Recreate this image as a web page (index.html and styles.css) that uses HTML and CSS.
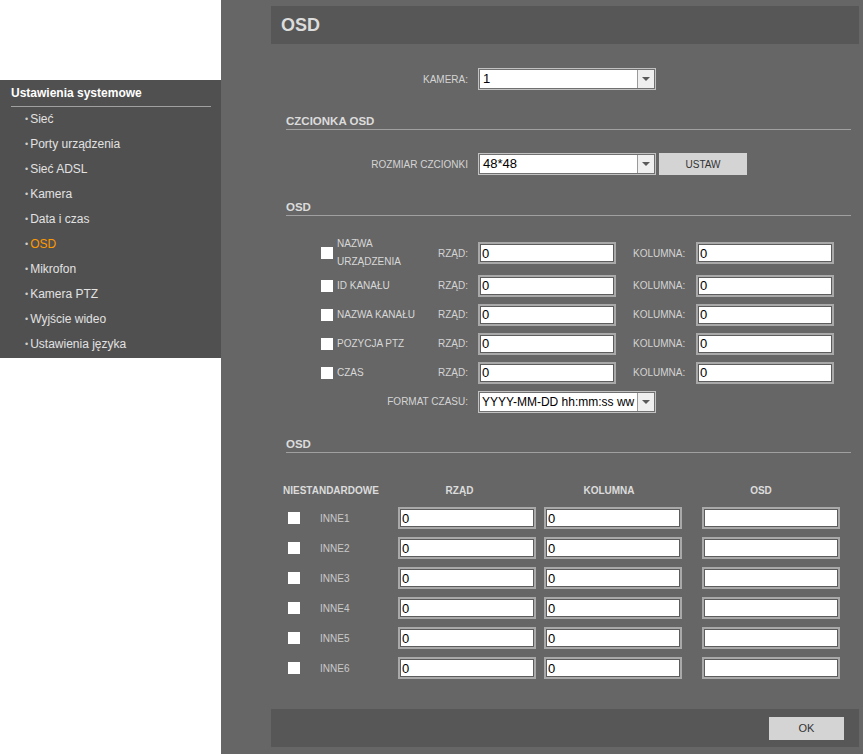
FILE: index.html
```html
<!DOCTYPE html>
<html lang="pl">
<head>
<meta charset="utf-8">
<title>OSD</title>
<link rel="stylesheet" href="styles.css">
</head>
<body>
<div class="page">
  <aside class="sidebar">
    <nav class="menu">
      <div class="menu-title">Ustawienia systemowe</div>
      <ul class="menu-list">
        <li class="menu-item">Sieć</li>
        <li class="menu-item">Porty urządzenia</li>
        <li class="menu-item">Sieć ADSL</li>
        <li class="menu-item">Kamera</li>
        <li class="menu-item">Data i czas</li>
        <li class="menu-item active">OSD</li>
        <li class="menu-item">Mikrofon</li>
        <li class="menu-item">Kamera PTZ</li>
        <li class="menu-item">Wyjście wideo</li>
        <li class="menu-item">Ustawienia języka</li>
      </ul>
    </nav>
  </aside>
  <main class="main">
    <div class="titlebar"><h1 class="title">OSD</h1></div>
    <div class="content">
      <div class="field-row row-camera">
        <span class="field-label">KAMERA:</span>
        <div class="select"><span class="select-value">1</span><span class="select-btn"></span></div>
      </div>

      <h2 class="section s-font">CZCIONKA OSD</h2>
      <div class="field-row row-size">
        <span class="field-label">ROZMIAR CZCIONKI</span>
        <div class="select"><span class="select-value">48*48</span><span class="select-btn"></span></div>
        <button class="btn-set">USTAW</button>
      </div>

      <h2 class="section s-osd">OSD</h2>
      <div class="osd-rows">
        <div class="osd-row tall">
          <div class="check-group"><input type="checkbox" class="cb"><span class="check-label">NAZWA<br>URZĄDZENIA</span></div>
          <span class="row-label">RZĄD:</span><input class="input" type="text" value="0">
          <span class="row-label col-label">KOLUMNA:</span><input class="input" type="text" value="0">
        </div>
        <div class="osd-row">
          <div class="check-group"><input type="checkbox" class="cb"><span class="check-label">ID KANAŁU</span></div>
          <span class="row-label">RZĄD:</span><input class="input" type="text" value="0">
          <span class="row-label col-label">KOLUMNA:</span><input class="input" type="text" value="0">
        </div>
        <div class="osd-row">
          <div class="check-group"><input type="checkbox" class="cb"><span class="check-label">NAZWA KANAŁU</span></div>
          <span class="row-label">RZĄD:</span><input class="input" type="text" value="0">
          <span class="row-label col-label">KOLUMNA:</span><input class="input" type="text" value="0">
        </div>
        <div class="osd-row">
          <div class="check-group"><input type="checkbox" class="cb"><span class="check-label">POZYCJA PTZ</span></div>
          <span class="row-label">RZĄD:</span><input class="input" type="text" value="0">
          <span class="row-label col-label">KOLUMNA:</span><input class="input" type="text" value="0">
        </div>
        <div class="osd-row">
          <div class="check-group"><input type="checkbox" class="cb"><span class="check-label">CZAS</span></div>
          <span class="row-label">RZĄD:</span><input class="input" type="text" value="0">
          <span class="row-label col-label">KOLUMNA:</span><input class="input" type="text" value="0">
        </div>
        <div class="field-row row-format">
          <span class="field-label">FORMAT CZASU:</span>
          <div class="select"><span class="select-value small">YYYY-MM-DD hh:mm:ss ww</span><span class="select-btn"></span></div>
        </div>
      </div>

      <h2 class="section s-osd2">OSD</h2>
      <div class="custom-grid">
        <div class="gh first">NIESTANDARDOWE</div>
        <div class="gh">RZĄD</div>
        <div class="gh">KOLUMNA</div>
        <div class="gh">OSD</div>

        <div class="g-check"><input type="checkbox" class="cb"><span class="g-label">INNE1</span></div>
        <input class="input g-input" type="text" value="0">
        <input class="input g-input" type="text" value="0">
        <input class="input g-input" type="text" value="">

        <div class="g-check"><input type="checkbox" class="cb"><span class="g-label">INNE2</span></div>
        <input class="input g-input" type="text" value="0">
        <input class="input g-input" type="text" value="0">
        <input class="input g-input" type="text" value="">

        <div class="g-check"><input type="checkbox" class="cb"><span class="g-label">INNE3</span></div>
        <input class="input g-input" type="text" value="0">
        <input class="input g-input" type="text" value="0">
        <input class="input g-input" type="text" value="">

        <div class="g-check"><input type="checkbox" class="cb"><span class="g-label">INNE4</span></div>
        <input class="input g-input" type="text" value="0">
        <input class="input g-input" type="text" value="0">
        <input class="input g-input" type="text" value="">

        <div class="g-check"><input type="checkbox" class="cb"><span class="g-label">INNE5</span></div>
        <input class="input g-input" type="text" value="0">
        <input class="input g-input" type="text" value="0">
        <input class="input g-input" type="text" value="">

        <div class="g-check"><input type="checkbox" class="cb"><span class="g-label">INNE6</span></div>
        <input class="input g-input" type="text" value="0">
        <input class="input g-input" type="text" value="0">
        <input class="input g-input" type="text" value="">
      </div>
    </div>
    <div class="footer"><button class="btn-ok">OK</button></div>
  </main>
</div>
</body>
</html>
```

FILE: styles.css
```css
* { box-sizing: border-box; }
html, body { margin: 0; height: 100%; }
body {
  font-family: "Liberation Sans", Arial, sans-serif;
  background: #666666;
  overflow: hidden;
}
.page { display: flex; height: 100vh; }

/* Sidebar */
.sidebar { width: 221px; flex: none; background: #ffffff; padding-top: 80px; }
.menu { background: #505050; padding-bottom: 1px; }
.menu-title {
  margin: 0 10px 0 11px;
  height: 27px;
  line-height: 26px;
  border-bottom: 1px solid #a0a0a0;
  color: #ffffff;
  font-weight: bold;
  font-size: 12px;
}
.menu-list { list-style: none; margin: 0; padding: 0; }
.menu-item {
  padding-left: 25px;
  height: 25px;
  line-height: 25px;
  font-size: 12px;
  color: #e2e2e2;
  white-space: nowrap;
}
.menu-item::before {
  content: "•";
  color: #cfcfcf;
  font-size: 9px;
  margin-right: 2px;
  vertical-align: 1px;
}
.menu-item.active { color: #ff9900; }

/* Main */
.main {
  flex: 1;
  display: flex;
  flex-direction: column;
  padding: 6px 4px 7px 50px;
}
.titlebar { height: 38px; flex: none; background: #575757; padding-left: 10px; }
.title { margin: 0; font-size: 18px; line-height: 38px; color: #dcdcdc; font-weight: bold; }
.content { flex: 1; padding: 0 8px 0 15px; }
.footer {
  height: 38px;
  flex: none;
  background: #575757;
  display: flex;
  justify-content: flex-end;
  align-items: center;
  padding-right: 15px;
}
.btn-ok {
  width: 75px;
  height: 23px;
  border: 0;
  background: #d4d4d4;
  color: #333;
  font: 11px "Liberation Sans", Arial, sans-serif;
  padding: 0;
}

/* Form rows */
.field-row { display: flex; align-items: center; height: 22px; }
.field-label {
  width: 192px;
  padding-right: 10px;
  flex: none;
  text-align: right;
  font-size: 10px;
  color: #d4d4d4;
  white-space: nowrap;
}
.row-camera { margin-top: 24px; }
.row-size { margin-top: 23px; }
.row-format { height: 29px; }

.section {
  margin: 0;
  font-size: 11.5px;
  line-height: 14px;
  padding-bottom: 1px;
  border-bottom: 1px solid #a0a0a0;
  color: #dcdcdc;
  font-weight: bold;
}
.s-font { margin-top: 24px; }
.s-osd { margin-top: 25px; }
.s-osd2 { margin-top: 21px; }

.select {
  width: 176px;
  height: 20px;
  margin-left: 1px;
  flex: none;
  display: flex;
  border: 1px solid #707070;
  outline: 1px solid #c2c2c2;
  background: #fff;
}
.select-value {
  flex: 1;
  min-width: 0;
  font-size: 13px;
  line-height: 18px;
  padding-left: 3px;
  color: #000;
  white-space: nowrap;
  overflow: hidden;
}
.select-value.small { font-size: 12px; padding-left: 2px; }
.select-btn {
  width: 17px;
  flex: none;
  background: #efefef;
  border-left: 1px solid #9a9a9a;
  display: flex;
  align-items: center;
  justify-content: center;
}
.select-btn::after {
  content: "";
  border-left: 4px solid transparent;
  border-right: 4px solid transparent;
  border-top: 4px solid #5a5a5a;
}
.btn-set {
  margin-left: 4px;
  width: 88px;
  height: 22px;
  border: 0;
  padding: 0;
  background: #d4d4d4;
  color: #333;
  font: 10px "Liberation Sans", Arial, sans-serif;
}

.input {
  width: 138px;
  height: 22px;
  flex: none;
  margin: 0;
  border: 2px solid #a9a9a9;
  box-shadow: inset 0 0 0 1px #5c5c5c;
  padding: 0 0 0 2px;
  font: 13px "Liberation Sans", Arial, sans-serif;
  color: #000;
  background: #fff;
  outline: none;
}

/* OSD rows */
.osd-rows { margin-top: 19px; }
.osd-row { display: flex; align-items: center; height: 29px; padding-left: 35px; }
.osd-row.tall { height: 36px; }
.check-group { width: 117px; flex: none; display: flex; align-items: center; gap: 4px; }
.cb {
  -webkit-appearance: none;
  appearance: none;
  margin: 0;
  width: 12px;
  height: 12px;
  background: #fff;
  border: 0;
  flex: none;
}
.check-label { font-size: 10px; line-height: 18px; color: #d8d8d8; white-space: nowrap; }
.row-label { width: 40px; flex: none; font-size: 10px; color: #d4d4d4; }
.col-label { width: 63px; margin-left: 17px; }

/* Custom grid */
.custom-grid {
  margin: 24px 0 0 -3px;
  display: grid;
  grid-template-columns: 100px 153px 146px 158px;
  grid-template-rows: 26px;
  grid-auto-rows: 30px;
  align-items: center;
}
.gh {
  font-size: 10px;
  font-weight: bold;
  color: #dcdcdc;
  text-align: center;
  white-space: nowrap;
}
.gh.first { text-align: left; }
.g-check { display: flex; align-items: center; gap: 20px; padding-left: 5px; }
.g-label { font-size: 10px; color: #cacaca; }
.g-input { justify-self: end; }
```
